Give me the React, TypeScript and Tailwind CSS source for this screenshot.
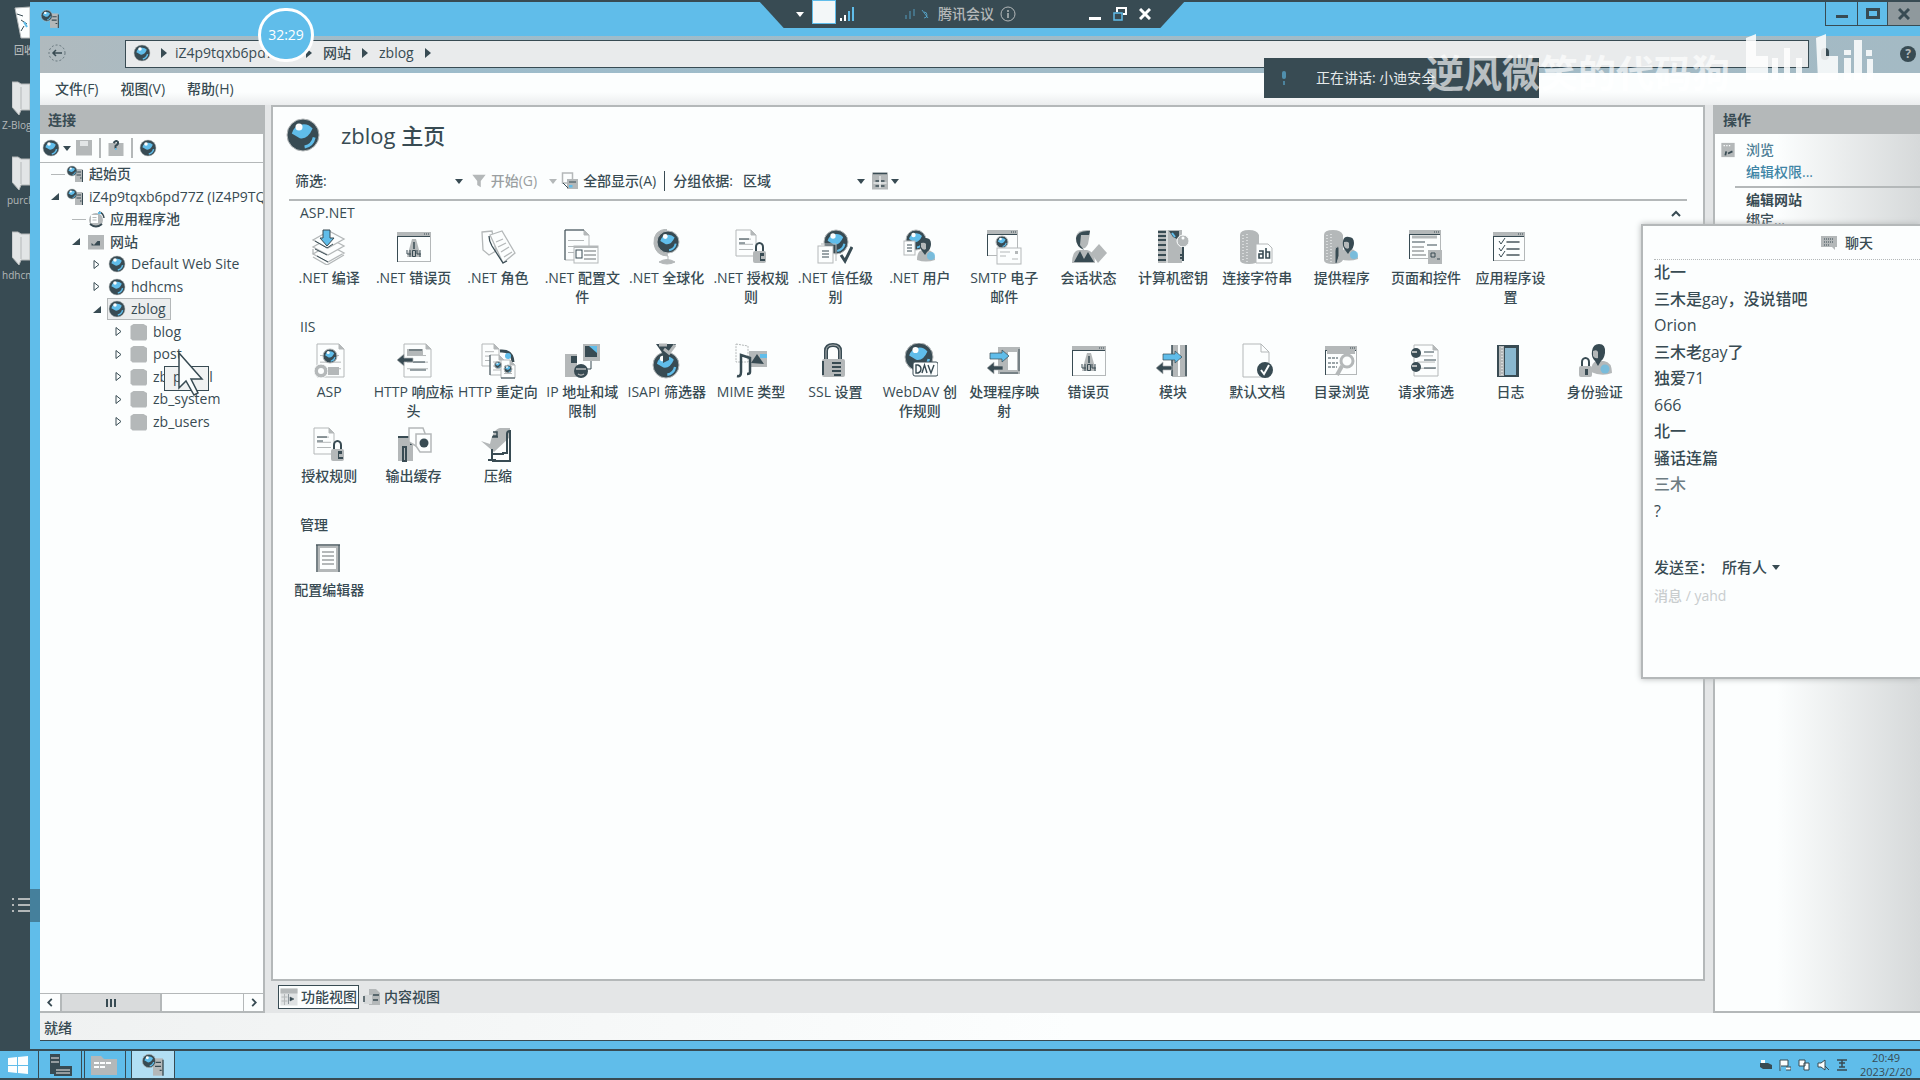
import React from "react";

const DARK = "#384b53";
const GREY = "#b4b8b9";
const BLUE = "#60bdea";
const PAPER = "#fcfefe";

/* ---------- drawing primitives, all on a 36 x 36 board ---------- */

function Ball({ x, y, r }: { x: number; y: number; r: number }) {
  return (
    <g>
      <circle cx={x} cy={y} r={r} fill={DARK} stroke={GREY} strokeWidth="1" />
      <path d={`M${x - r * 0.7} ${y - r * 0.1} a${r * 0.75} ${r * 0.75} 0 0 1 ${r * 1.3} ${-r * 0.3} q${-r * 0.3} ${r * 0.7} ${-r * 0.8} ${r * 0.6} z`} fill={BLUE} />
      <path d={`M${x + r * 0.1} ${y + r * 0.75} q${r * 0.5} ${-r * 0.1} ${r * 0.6} ${-r * 0.6}`} stroke={BLUE} strokeWidth={r * 0.18} fill="none" />
      <circle cx={x - r * 0.25} cy={y - r * 0.5} r={r * 0.22} fill={PAPER} />
    </g>
  );
}

function Doc({ x, y, w, h }: { x: number; y: number; w: number; h: number }) {
  return (
    <g stroke={GREY} fill={PAPER}>
      <path d={`M${x} ${y} h${w - 5} l5 5 v${h - 5} h${-w} z`} />
      <path d={`M${x + w - 5} ${y} v5 h5`} fill={GREY} />
      <path d={`M${x + 3} ${y + h * 0.35} h${w - 8} M${x + 3} ${y + h * 0.55} h${w - 6} M${x + 3} ${y + h * 0.75} h${w - 6}`} />
    </g>
  );
}

function Win({ x, y, w, h }: { x: number; y: number; w: number; h: number }) {
  return (
    <g>
      <rect x={x + 0.5} y={y + 0.5} width={w} height={h} fill={PAPER} stroke={GREY} />
      <rect x={x} y={y} width={w + 1} height="4" fill={GREY} />
      <path d={`M${x} ${y + 4.5} h${w} M${x + 0.5} ${y + 4} v${h - 3}`} stroke={DARK} />
      <path d={`M${x + w - 6} ${y + 2} h5`} stroke={DARK} strokeDasharray="1 1" />
    </g>
  );
}

function Padlock({ x, y }: { x: number; y: number }) {
  return (
    <g>
      <path d={`M${x + 3} ${y + 9} v-4 a3.5 4 0 0 1 7 0 v4`} fill="none" stroke={DARK} strokeWidth="2" />
      <rect x={x} y={y + 9} width="13" height="12" rx="2" fill={GREY} />
      <path d={`M${x + 7} ${y + 11} h4 v3 h-3 v3 h4 v2 h-5 z`} fill={DARK} />
    </g>
  );
}

function Person({ x, y }: { x: number; y: number }) {
  return (
    <g>
      <path d={`M${x + 1} ${y + 23} q0 -10 6 -10 h5 q7 1 7 10 q-9 3 -18 0z`} fill={GREY} />
      <circle cx={x + 15} cy={y + 19} r="4" fill={BLUE} opacity=".7" />
      <path d={`M${x + 4} ${y + 5} q1 -5 6 -4 q5 0 5 6 q0 5 -4 8 l-2 3 l-3 -4 q-3 -4 -2 -9z`} fill={DARK} />
      <path d={`M${x + 5} ${y + 6} q4 -1 5 1 v5 q-3 2 -5 -2z`} fill={GREY} />
    </g>
  );
}

function ArrowR({ x, y }: { x: number; y: number }) {
  return <path d={`M${x} ${y + 3} h12 v-3 l7 6 l-7 6 v-3 h-12 z`} fill={BLUE} stroke={DARK} strokeWidth=".7" />;
}
function ArrowL({ x, y }: { x: number; y: number }) {
  return <path d={`M${x + 16} ${y + 4} h-9 v-4 l-7 6 l7 6 v-4 h9 z`} fill={DARK} stroke={GREY} strokeWidth=".7" />;
}
function Alert404({ x, y }: { x: number; y: number }) {
  return (
    <g>
      <path d={`M${x} ${y + 20} l5 -18 h4 l5 18z`} fill={GREY} />
      <path d={`M${x + 7} ${y + 5} v7`} stroke={DARK} strokeWidth="1.5" />
      <path d={`M${x} ${y + 13} v4 h4 M${x + 3} ${y + 13} v7 M${x + 5.5} ${y + 13.5} h3 v6 h-3z M${x + 10} ${y + 13} v4 h4 M${x + 13} ${y + 13} v7`} stroke={DARK} fill="none" />
    </g>
  );
}
function Drum({ x, y }: { x: number; y: number }) {
  return (
    <g>
      <path d={`M${x} ${y + 5} q0 -5 9 -5 q8 0 10 5 v25 q-2 4 -10 4 q-9 0 -9 -4z`} fill={GREY} />
      <path d={`M${x + 3} ${y + 5} v25 M${x + 7} ${y + 4} v28`} stroke={PAPER} strokeDasharray="1 2" />
    </g>
  );
}

const art: Record<string, React.ReactNode> = {
  compile: (
    <g stroke={GREY} strokeWidth="1.3" fill={PAPER}>
      <path d="M2 25 l15 8 l16 -9 l-15 -8z M2 20 v5 M2 28 l14 8 l17 -10" />
      <path d="M2 18 l15 8 l16 -9 l-15 -8z" />
      <path d="M2 11 l15 8 l16 -9 l-15 -8z" />
      <path d="M4 12 l12 7 l6 -4 M4 20 l12 6 M6 27 l11 6" stroke={DARK} strokeWidth="1" fill="none" />
      <path d="M12 1 h7 v8 h4 l-7 8 l-7 -8 h3z" fill={BLUE} stroke={DARK} strokeWidth="1" />
    </g>
  ),
  error: <g><Win x={1} y={3} w={33} h={29} /><Alert404 x={11} y={8} /></g>,
  roles: (
    <g stroke={GREY} strokeWidth="1.3" fill={PAPER}>
      <path d="M2 3 l10 -1 l4 20 l-7 4 l-6 -5z" />
      <path d="M10 6 l12 -4 l13 22 l-12 10z" />
      <path d="M9 7 q0 5 3 10 l11 17 l4 -2" fill="none" stroke={DARK} />
      <path d="M16 13 l7 -3 M18 18 l8 -4 M21 23 l8 -5 M24 28 l8 -5" />
    </g>
  ),
  config: (
    <g>
      <Doc x={1} y={1} w={24} h={30} />
      <path d="M1 1 v30 M1 1 h19" stroke={DARK} />
      <rect x="10" y="17" width="24" height="17" fill={PAPER} stroke={GREY} />
      <path d="M10 18 h24 M20 22 h12 M20 26 h12 M20 30 h12" stroke={GREY} strokeWidth="2" />
      <rect x="12" y="21" width="6" height="8" fill={PAPER} stroke={DARK} />
    </g>
  ),
  globalize: (
    <g>
      <path d="M18 0 q-14 1 -13 15 q2 12 14 12 v4 M10 33 q8 -5 16 0 q-8 4 -16 0" fill={GREY} stroke={GREY} />
      <Ball x={19} y={13} r={11} />
    </g>
  ),
  authorize: <g><Doc x={3} y={1} w={20} h={26} /><path d="M6 10 h10 M6 14 h6" stroke={DARK} /><Padlock x={20} y={13} /></g>,
  trust: (
    <g>
      <Ball x={19} y={13} r={12} />
      <rect x="1" y="17" width="15" height="17" fill={PAPER} stroke={GREY} />
      <path d="M4 15 h15 v17" fill="none" stroke={GREY} />
      <path d="M5 22 h7 M5 25 h7 M5 28 h7" stroke={DARK} />
      <path d="M24 26 l4 6 l7 -14" fill="none" stroke={DARK} strokeWidth="3" />
    </g>
  ),
  users: (
    <g><Ball x={14} y={11} r={10} /><Person x={14} y={8} /><rect x="2" y="12" width="11" height="14" fill={PAPER} stroke={GREY} /><path d="M5 16 h5 M5 19 h5 M5 22 h5" stroke={DARK} /></g>
  ),
  smtp: (
    <g><Win x={1} y={1} w={30} h={25} /><Ball x={16} y={13} r={6} /><rect x="11" y="19" width="24" height="16" fill={PAPER} stroke={GREY} /><path d="M14 23 h10 M14 27 h6 M26 30 h6" fill="none" stroke={GREY} /><path d="M29 22 h3 v3 h-3z" fill={GREY} /></g>
  ),
  session: (
    <g>
      <path d="M1 34 q0 -12 7 -13 h8 q8 2 8 13z" fill={GREY} /><path d="M3 33 l6 -11 l4 8 l4 -7 l6 10" fill={DARK} />
      <path d="M5 7 q2 -7 14 -6 v3 l-2 11 q-3 6 -7 4 q-6 -4 -5 -12z" fill={GREY} /><path d="M5 9 q2 -8 14 -7 l-1 4 h-8 l-1 10 l4 5 q-8 -3 -8 -12z" fill={DARK} />
      <path d="M20 24 l8 -9 l8 9 l-9 10z" fill={GREY} />
    </g>
  ),
  keys: (
    <g>
      <rect x="3" y="1" width="24" height="33" fill={GREY} />
      <path d="M3 3 h8 M3 7 h8 M3 11 h8 M3 16 h8 M3 21 h8 M3 26 h8 M3 31 h8" stroke={DARK} strokeWidth="2" />
      <path d="M12 1 v33" stroke={PAPER} /><path d="M14 2 h10 v9 l-6 -3z" fill={DARK} /><path d="M17 4 l3 4" stroke={BLUE} strokeWidth="2" />
      <circle cx="28" cy="12" r="6" fill={GREY} stroke={PAPER} /><circle cx="28" cy="9" r="1.5" fill={PAPER} /><path d="M28 18 v14 M28 26 h-3 M28 29 h-3" stroke={DARK} strokeWidth="2" />
    </g>
  ),
  connection: (
    <g><Drum x={1} y={1} /><path d="M17 15 h12 l4 4 v15 h-16z" fill={PAPER} stroke={GREY} /><path d="M20 22 h4 v7 h-4 v-4 h4 M27 19 v10 h3.500 v-6 h-3.500" fill="none" stroke={DARK} strokeWidth="1.600" /></g>
  ),
  providers: <g><Drum x={0} y={1} /><Person x={15} y={7} /><path d="M11 34 v-12 q0 -5 4 -4 v9 l-2 7" fill={DARK} stroke={GREY} /></g>,
  pages: (
    <g><Win x={1} y={1} w={31} h={28} /><path d="M4 8 h25" stroke={GREY} strokeWidth="3" /><path d="M4 13 h13 M19 16 h10" stroke={DARK} /><path d="M4 18 h12 M4 22 h12 M4 26 h14" stroke={GREY} strokeWidth="2" /><rect x="20" y="21" width="14" height="14" fill={GREY} /><path d="M23 24 h4 v4 h-4z M29 30 h3" fill="none" stroke={DARK} /></g>
  ),
  settings: (
    <g><Win x={1} y={3} w={31} h={28} /><path d="M14 13 h14 M14 20 h14 M14 26 h14" stroke={GREY} strokeWidth="2" /><path d="M15 13 h12 M15 20 h12 M15 26 h12 M7 12 l2 3 l4 -6 M7 19 l2 3 l4 -6 M7 25 l2 3 l4 -6" fill="none" stroke={DARK} /></g>
  ),
  asp: (
    <g><Doc x={6} y={1} w={27} h={33} /><Ball x={19} y={13} r={7} /><circle cx="10" cy="28" r="7" fill={GREY} stroke={PAPER} /><circle cx="10" cy="28" r="3" fill={PAPER} /><path d="M17 24 h11 v8 h-11z" fill={GREY} /></g>
  ),
  headers: <g><Doc x={8} y={1} w={27} h={33} /><path d="M11 6 h16 v6 h-16z" fill={GREY} /><path d="M13 7 h13 M17 19 h12 M14 27 h16" stroke={DARK} /><ArrowL x={1} y={11} /></g>,
  redirect: (
    <g><Doc x={2} y={1} w={17} h={22} /><path d="M20 8 q12 -1 13 11" stroke={DARK} strokeWidth="3" fill="none" /><circle cx="28" cy="13" r="3" fill={BLUE} /><Doc x={10} y={12} w={14} h={20} /><Doc x={21} y={17} w={14} h={18} /><path d="M10 12 v20 M21 35 h14" stroke={DARK} /><Ball x={18} y={22} r={3.500} /><Ball x={28} y={26} r={4} /></g>
  ),
  ip: (
    <g><path d="M1 11 h12 v23 h-12z" fill={GREY} /><path d="M7 13 h6 v7 h-6z" fill={DARK} /><rect x="19" y="1" width="17" height="17" fill={GREY} /><path d="M21 3 h12 v11 h-12z" fill={DARK} /><path d="M25 3 h8 v7z" fill={BLUE} /><path d="M27 18 v8 h-10" fill="none" stroke={DARK} /><circle cx="17" cy="28" r="7" fill={DARK} /><path d="M12 26 h10 M14 31 q3 2 6 0" stroke={GREY} strokeWidth="1.500" /></g>
  ),
  isapi: <g><Ball x={17} y={22} r={13} /><path d="M7 1 h20 l-7 10 v6 l-6 3 v-9z" fill={DARK} /><path d="M10 2 h8 M15 6 l5 4 l6 -8" stroke={GREY} strokeWidth="3" fill="none" /></g>,
  mime: (
    <g><path d="M3 1 l12 2 v16 h-12z" fill={PAPER} stroke={GREY} strokeDasharray="2 1" /><path d="M16 8 h18 v16 h-18z" fill={GREY} /><path d="M27 11 h7 v4 h-7z" fill={BLUE} /><path d="M4 33 q4 1 4 -4 v-17 l9 3 v14 q0 2 -3 2" fill="none" stroke={DARK} strokeWidth="2.500" /><path d="M18 20 l6 -9 l7 10z" fill={DARK} /></g>
  ),
  ssl: (
    <g><path d="M9 17 v-9 q0 -6 7 -6 q7 0 7 6 v9" fill="none" stroke={DARK} strokeWidth="4" /><path d="M9 17 v-9 q0 -6 7 -6 q7 0 7 6 v9" fill="none" stroke={GREY} strokeWidth="1" /><rect x="5" y="16" width="23" height="18" rx="2" fill={GREY} /><path d="M5 18 h2 v14 h-2z M15 19 h9 v2 h-9z M15 23 h9 v2 h-9z M15 27 h9 v2 h-9z M17 31 h7 v2 h-7z" fill={DARK} /></g>
  ),
  webdav: (
    <g><Ball x={17} y={14} r={14} /><rect x="11" y="19" width="25" height="14" rx="2" fill={PAPER} stroke={DARK} /><path d="M14 22 v8 h2 q3 -1 3 -4 t-3 -4z M20 30 l2.500 -8 l2.500 8 M26 22 l3 8 l3 -8" fill="none" stroke={DARK} strokeWidth="1.400" /></g>
  ),
  handler: <g><path d="M12 4 h22 v27 h-22z" fill={GREY} /><path d="M33 6 v22 M14 30 h18" stroke={DARK} /><rect x="22" y="9" width="9" height="18" fill={PAPER} /><ArrowR x={4} y={7} /><ArrowL x={1} y={19} /></g>,
  modules: <g><path d="M17 2 h15 v32 h-15z" fill={GREY} /><path d="M17 2 v31 M31 2 v31" stroke={DARK} strokeWidth="1.500" /><path d="M24 2 v31" stroke={PAPER} strokeWidth="2" /><ArrowR x={8} y={8} /><ArrowL x={1} y={19} /></g>,
  defaultdoc: <g><path d="M4 1 h18 l8 8 v25 h-26z" fill={PAPER} stroke={GREY} /><path d="M22 1 v8 h8" fill="none" stroke={GREY} /><circle cx="26" cy="27" r="8" fill={DARK} /><path d="M22 27 l3 4 l5 -9" fill="none" stroke={PAPER} strokeWidth="2" /></g>,
  browse: <g><Win x={1} y={3} w={31} h={28} /><path d="M3 9 h28" stroke={GREY} strokeWidth="4" /><path d="M4 15 h10 M4 20 h10 M4 24 h9" stroke={DARK} strokeDasharray="3 1" /><circle cx="23" cy="18" r="6" fill={PAPER} stroke={GREY} strokeWidth="3" /><path d="M18 23 l-5 9" stroke={GREY} strokeWidth="4" /></g>,
  filter: <g><Doc x={6} y={2} w={24} h={31} /><path d="M16 9 h10 M16 17 h12 M16 25 h12" stroke={DARK} /><circle cx="8" cy="10" r="5" fill={DARK} /><circle cx="8" cy="24" r="5" fill={DARK} /><path d="M4 9 h5 M4 23 h5" stroke={GREY} strokeWidth="2" /></g>,
  log: <g><rect x="5" y="2" width="22" height="32" fill={DARK} /><rect x="7" y="3" width="5" height="30" fill={GREY} /><rect x="13" y="5" width="11" height="27" fill="#8ab8cf" /><path d="M10 4 v28" stroke={PAPER} strokeDasharray="1 2" /></g>,
  auth: <g><path d="M14 29 q0 -10 6 -11 h7 q8 1 8 12 q-10 4 -21 -1z" fill={GREY} /><circle cx="28" cy="26" r="4.500" fill={BLUE} opacity=".7" /><path d="M15 8 q1 -7 7 -7 q7 0 6 9 q-1 6 -4 8 l-3 5 l-3 -5 q-4 -4 -3 -10z" fill={DARK} /><path d="M16 8 q4 -2 5 1 v6 q-3 1 -5 -2z" fill={GREY} /><g transform="translate(2 14)"><path d="M3 9 v-4 a3.500 4 0 0 1 7 0 v4" fill="none" stroke={DARK} strokeWidth="2" /><rect x="0" y="9" width="13" height="11" rx="2" fill={GREY} /><path d="M6 12 h3 v6 h-3z" fill={DARK} /></g></g>,
  cache: <g><path d="M2 10 h15 v24 h-15z" fill={GREY} /><path d="M2 10 h13 v8 M7 20 h3 v14 h-3z" fill="none" stroke={DARK} strokeWidth="2" /><path d="M13 1 h14 l3 8 v10 h-10 l-7 -4z" fill={PAPER} stroke={GREY} strokeWidth="1.500" /><path d="M20 7 h15 v18 h-11 l-4 -6z" fill={PAPER} stroke={GREY} strokeWidth="1.500" /><circle cx="28" cy="16" r="4.500" fill={DARK} /></g>,
  compress: <g><path d="M1 14 l9 3 q3 -15 10 -16 h10 v9 l-16 15z" fill={GREY} /><path d="M13 5 h4 v4 h-4 M12 10 h6" stroke={DARK} fill="none" strokeWidth="1.500" /><path d="M22 26 h5 v-19 q0 -3 3 -3 v30 h-18" fill="none" stroke={DARK} strokeWidth="2" /><path d="M12 22 v12 M8 33 h8 M12 27 h12" stroke={DARK} strokeWidth="2" /></g>,
  editor: <g><rect x="5" y="3" width="24" height="28" fill={GREY} /><path d="M5 4 h24 M6 4 v27 M28 4 v27" stroke={DARK} /><rect x="9" y="7" width="16" height="21" fill={PAPER} /><path d="M11 11 h12 M11 15 h12 M11 19 h12 M11 23 h12" stroke={GREY} strokeWidth="2" /></g>,
  globe: <Ball x={18} y={18} r={16} />,
  server: <g><path d="M18 8 h15 v26 h-15z" fill={GREY} /><path d="M21 14 h9 M21 20 h9 M28 26 h3 M33 10 v24" stroke={DARK} strokeWidth="2" /><Ball x={12} y={12} r={10} /></g>,
  pool: <g><circle cx="18" cy="20" r="14" fill={GREY} /><path d="M6 28 q12 10 24 0" stroke={DARK} strokeWidth="4" fill="none" /><rect x="8" y="10" width="14" height="16" fill={PAPER} /><path d="M11 15 h8 M11 20 h8" stroke={GREY} strokeWidth="2" /><path d="M24 4 q9 2 10 12" stroke={DARK} strokeWidth="3" fill="none" /><path d="M22 6 h6" stroke={BLUE} strokeWidth="4" /></g>,
  folder: <path d="M1 6 l6 -4 h20 l7 4 v26 l-2 3 h-27 l-4 -4z" fill={GREY} />,
  sites: <g><path d="M2 4 h32 v29 h-32z" fill={GREY} /><path d="M9 25 v-5 l5 4 l7 -8 h5 v9z" fill={DARK} /></g>,
  save: <g><path d="M2 2 h32 v31 h-32z" fill={GREY} /><path d="M10 4 h16 v10 h-16z" fill="#e2e5e6" /></g>,
  up: <g><path d="M3 8 h30 v26 h-30z" fill={GREY} /><path d="M13 8 q6 -7 9 -2 q1 5 -5 8 v5" fill="none" stroke={DARK} strokeWidth="4" /><path d="M16 20 h3" stroke={BLUE} strokeWidth="4" /></g>,
  showall: <g><rect x="3" y="2" width="20" height="20" fill={PAPER} stroke={GREY} strokeWidth="3" /><rect x="12" y="14" width="22" height="20" fill={GREY} /><path d="M4 22 l10 10 M16 20 h14" stroke={DARK} strokeWidth="2" /><path d="M16 26 h7 v5 h-7z" fill={BLUE} /></g>,
  features: <g><path d="M1 1 h34 v34 h-34z" fill="#dfe2e3" /><path d="M1 1 h34 v10 h-34z" fill={GREY} /><path d="M3 18 h12 M3 26 h12 M9 12 v22" stroke={GREY} strokeWidth="2" /><path d="M17 12 v20 M20 18 l8 4 l-8 4z" stroke={DARK} fill={DARK} /></g>,
  content: <g><path d="M12 2 h14 l8 8 v24 h-22z" fill={GREY} /><path d="M2 14 h16 v18 h-16z" fill="#d5d8d9" /><path d="M2 16 v12 M20 14 h12 M20 24 h10" stroke={DARK} strokeWidth="3" /></g>,
  view: <g><rect x="2" y="1" width="32" height="34" fill={GREY} /><path d="M4 3 h28 M9 18 h7 M20 18 h7 M9 28 h7 M20 28 h7" stroke={DARK} strokeWidth="3" /><path d="M18 8 v24 M5 22 h26" stroke={PAPER} strokeWidth="2" /></g>,
  funnel: <path d="M3 4 h30 l-11 14 v14 l-8 -5 v-9z" fill={GREY} />,
  page: <g><path d="M3 2 h30 v32 h-30z" fill={GREY} /><path d="M12 30 l2 -9 M18 26 l10 -5" stroke={DARK} strokeWidth="4" /><path d="M8 8 h18" stroke={PAPER} strokeWidth="3" strokeDasharray="3 3" /></g>,
};

function Icon({ name, className }: { name: string; className: string }) {
  return (
    <svg viewBox="0 0 36 36" className={className} aria-hidden="true">
      {art[name]}
    </svg>
  );
}

function Tri({ className = "" }: { className?: string }) {
  return (
    <svg viewBox="0 0 8 5" className={"h-[5px] w-2 shrink-0 " + className} aria-hidden="true">
      <path d="M0 0 h8 l-4 5z" fill="currentColor" />
    </svg>
  );
}
function CrumbArrow() {
  return (
    <svg viewBox="0 0 6 10" className="h-[10px] w-[6px] shrink-0" aria-hidden="true">
      <path d="M0 0 l6 5 l-6 5z" fill={DARK} />
    </svg>
  );
}

/* ---------- data ---------- */

type Node = { label: string; icon: string; pad: string; state: "open" | "closed" | "none"; selected?: boolean };
const tree: Node[] = [
  { label: "起始页", icon: "server", pad: "pl-[11px]", state: "none" },
  { label: "iZ4p9tqxb6pd77Z (IZ4P9TQXB6PD77Z\\Administrator)", icon: "server", pad: "pl-[11px]", state: "open" },
  { label: "应用程序池", icon: "pool", pad: "pl-8", state: "none" },
  { label: "网站", icon: "sites", pad: "pl-8", state: "open" },
  { label: "Default Web Site", icon: "globe", pad: "pl-[53px]", state: "closed" },
  { label: "hdhcms", icon: "globe", pad: "pl-[53px]", state: "closed" },
  { label: "zblog", icon: "globe", pad: "pl-[53px]", state: "open", selected: true },
  { label: "blog", icon: "folder", pad: "pl-[75px]", state: "closed" },
  { label: "post", icon: "folder", pad: "pl-[75px]", state: "closed" },
  { label: "zb_install", icon: "folder", pad: "pl-[75px]", state: "closed" },
  { label: "zb_system", icon: "folder", pad: "pl-[75px]", state: "closed" },
  { label: "zb_users", icon: "folder", pad: "pl-[75px]", state: "closed" },
];

const sections: { title: string; items: [string, string][] }[] = [
  {
    title: "ASP.NET",
    items: [
      ["compile", ".NET 编译"], ["error", ".NET 错误页"], ["roles", ".NET 角色"], ["config", ".NET 配置文\n件"],
      ["globalize", ".NET 全球化"], ["authorize", ".NET 授权规\n则"], ["trust", ".NET 信任级\n别"], ["users", ".NET 用户"],
      ["smtp", "SMTP 电子\n邮件"], ["session", "会话状态"], ["keys", "计算机密钥"], ["connection", "连接字符串"],
      ["providers", "提供程序"], ["pages", "页面和控件"], ["settings", "应用程序设\n置"],
    ],
  },
  {
    title: "IIS",
    items: [
      ["asp", "ASP"], ["headers", "HTTP 响应标\n头"], ["redirect", "HTTP 重定向"], ["ip", "IP 地址和域\n限制"],
      ["isapi", "ISAPI 筛选器"], ["mime", "MIME 类型"], ["ssl", "SSL 设置"], ["webdav", "WebDAV 创\n作规则"],
      ["handler", "处理程序映\n射"], ["error", "错误页"], ["modules", "模块"], ["defaultdoc", "默认文档"],
      ["browse", "目录浏览"], ["filter", "请求筛选"], ["log", "日志"], ["auth", "身份验证"],
      ["authorize", "授权规则"], ["cache", "输出缓存"], ["compress", "压缩"],
    ],
  },
  { title: "管理", items: [["editor", "配置编辑器"]] },
];

const messages = ["北一", "三木是gay，没说错吧", "Orion", "三木老gay了", "独爱71", "666", "北一", "骚话连篇", "三木", "?"];

/* ---------- parts ---------- */

function Desktop() {
  return (
    <aside className="relative flex w-[30px] shrink-0 flex-col overflow-hidden bg-[#384b53] text-[10px] text-[#b4b8b9]">
      {["回收站", "Z-Blog", "purch", "hdhcms"].map((t, i) => (
        <div key={t} className="flex h-[75px] shrink-0 flex-col pt-[6px]">
          <svg viewBox="0 0 18 34" className="ml-3 h-[34px] w-[18px] shrink-0" aria-hidden="true">
            {i === 0 ? (
              <g><path d="M3 2 l15 -1 v31 h-9z" fill={PAPER} stroke={GREY} /><path d="M5 8 l6 2 M9 14 l6 4 M12 20 l-3 5" stroke={DARK} /><path d="M12 16 l3 5" stroke={BLUE} strokeWidth="2" /></g>
            ) : (
              <path d="M0 1 h6 l3 2 h9 v26 h-9 l-2 5 l-7 -8z M9 6 v22" fill="#e2e5e6" stroke={GREY} />
            )}
          </svg>
          <span className={i === 0 ? "ml-[14px] whitespace-nowrap leading-5" : i === 2 ? "ml-[7px] whitespace-nowrap leading-5" : "ml-[2px] whitespace-nowrap leading-5"}>{t}</span>
        </div>
      ))}
      <div className="absolute bottom-[137px] left-3 flex flex-col gap-1">
        {[0, 1, 2].map((n) => (
          <div key={n} className="flex gap-1">
            <span className="h-[2px] w-[2px] bg-[#b4b8b9]" />
            <span className="h-[2px] w-3 bg-[#b4b8b9]" />
          </div>
        ))}
      </div>
    </aside>
  );
}

function TreeRow({ node }: { node: Node }) {
  return (
    <li className={"flex min-w-0 items-center " + node.pad}>
      <span className="flex w-[14px] shrink-0 items-center">
        {node.state !== "none" && (
          <button aria-label={"展开 " + node.label}>
            <svg viewBox="0 0 8 9" className="block h-[9px] w-2" aria-hidden="true">
              {node.state === "open" ? <path d="M8 1 v7 h-8z" fill={DARK} /> : <path d="M1 0.5 l5 4 l-5 4z" fill={PAPER} stroke={DARK} />}
            </svg>
          </button>
        )}
        {node.state === "none" && <span className="w-full border-t border-[#b4b8b9]" />}
      </span>
      <button
        className={
          "flex min-w-0 items-center gap-[5px] whitespace-nowrap " +
          (node.selected ? "border border-[#b4b8b9] bg-[#ebedee] pr-1 leading-5" : "border border-transparent leading-5")
        }
      >
        <Icon name={node.icon} className="h-[18px] w-[18px] shrink-0" />
        {node.label}
      </button>
    </li>
  );
}

function Connections() {
  return (
    <section className="flex w-[225px] shrink-0 flex-col overflow-hidden border-b-2 border-r-2 border-[#b4b8b9] bg-[#fcfefe]">
      <h2 className="flex h-[29px] shrink-0 items-center bg-[#b4b8b9] pl-2 text-sm font-bold">连接</h2>
      <div className="flex h-[29px] shrink-0 items-center border-b border-[#b4b8b9] pl-[2px]">
        <button aria-label="创建连接" className="flex items-center gap-[3px]"><Icon name="globe" className="h-[18px] w-[18px]" /><Tri /></button>
        <button aria-label="保存连接" className="ml-1"><Icon name="save" className="h-[18px] w-[18px]" /></button>
        <span className="ml-1.5 h-5 w-[2px] bg-[#b4b8b9]" />
        <button aria-label="向上" className="ml-1.5"><Icon name="up" className="h-[18px] w-[18px]" /></button>
        <span className="ml-1.5 h-5 w-[2px] bg-[#b4b8b9]" />
        <button aria-label="删除连接" className="ml-1.5"><Icon name="globe" className="h-[18px] w-[18px]" /></button>
      </div>
      <ul className="grid h-[270px] shrink-0 auto-rows-fr text-sm">
        {tree.map((n) => <TreeRow key={n.label} node={n} />)}
      </ul>
      <div className="mt-auto flex h-[18px] shrink-0 items-center border-t border-[#b4b8b9] text-base leading-4">
        <button aria-label="向左滚动" className="flex w-5 justify-center">
          <svg viewBox="0 0 6 10" className="h-[9px] w-[6px]"><path d="M5 1 l-4 4 l4 4" fill="none" stroke={DARK} strokeWidth="2" /></svg>
        </button>
        <div className="flex h-full flex-1">
          <div className="flex h-full w-[56%] items-center justify-center gap-[2px] border-x-2 border-[#b4b8b9] bg-[#d9dbdc]">
            <span className="h-2 w-[2px] bg-[#384b53]" /><span className="h-2 w-[2px] bg-[#384b53]" /><span className="h-2 w-[2px] bg-[#384b53]" />
          </div>
        </div>
        <button aria-label="向右滚动" className="flex h-full w-5 items-center justify-center border-l border-[#b4b8b9]">
          <svg viewBox="0 0 6 10" className="h-[9px] w-[6px]"><path d="M1 1 l4 4 l-4 4" fill="none" stroke={DARK} strokeWidth="2" /></svg>
        </button>
      </div>
    </section>
  );
}

function FilterBar() {
  return (
    <div className="mr-4 ml-4 flex h-[38px] items-center border-b-2 border-[#b4b8b9] text-sm whitespace-nowrap">
      <label htmlFor="filter" className="ml-[6px]">筛选:</label>
      <input id="filter" className="ml-2 h-5 w-[120px] bg-transparent outline-none" />
      <Tri />
      <button className="ml-2 flex items-center text-[#9a9fa1]"><Icon name="funnel" className="mr-1 h-4 w-4" />开始(G)</button>
      <Tri className="ml-3 text-[#b4b8b9]" />
      <button className="ml-1 flex items-center gap-1"><Icon name="showall" className="h-[18px] w-[18px]" />全部显示(A)</button>
      <span className="mx-2 h-5 w-px bg-[#384b53]" />
      <label htmlFor="group">分组依据:</label>
      <span className="ml-2.5 flex items-center">
        <select id="group" className="w-[114px] appearance-none bg-transparent outline-none"><option>区域</option></select>
        <Tri />
      </span>
      <button aria-label="视图" className="ml-1.5 flex items-center gap-0.5"><Icon name="view" className="h-[18px] w-[18px]" /><Tri /></button>
    </div>
  );
}

function Home() {
  return (
    <main className="flex min-w-0 flex-1 flex-col">
      <div className="flex flex-1 flex-col overflow-hidden border-2 border-[#b4b8b9] bg-[#fcfefe]">
        <header className="flex h-[56px] shrink-0 items-center gap-5 pl-3">
          <Icon name="globe" className="h-9 w-9" />
          <h1 className="text-[22px] leading-7 font-medium">zblog 主页</h1>
        </header>
        <FilterBar />
        <div className="pl-[14px] pr-[66px] text-sm">
          {sections.map((s, i) => (
            <section key={s.title} className="mb-1">
              <div className="flex h-[26px] items-center justify-between pb-0.5 pl-[13px]">
                <h3 className="leading-5">{s.title}</h3>
                {i === 0 && (
                  <button aria-label="折叠" className="-mr-11">
                    <svg viewBox="0 0 10 7" className="h-[7px] w-[10px]"><path d="M1 6 l4 -4 l4 4" fill="none" stroke={DARK} strokeWidth="2" /></svg>
                  </button>
                )}
              </div>
              <div className="grid grid-cols-[repeat(16,minmax(0,1fr))]">
                {s.items.map(([icon, label]) => (
                  <button key={label} className="flex h-[84px] flex-col items-center pt-0.5">
                    <Icon name={icon} className="h-9 w-9 shrink-0" />
                    <span className="mt-[3px] whitespace-pre text-center leading-[19px]">{label}</span>
                  </button>
                ))}
              </div>
            </section>
          ))}
        </div>
      </div>
      <div className="flex h-8 shrink-0 items-center gap-1 pl-[7px] text-sm">
        <button className="flex h-6 items-center gap-[3px] border border-[#384b53] bg-[#fcfefe] px-px whitespace-nowrap"><Icon name="features" className="h-[18px] w-[18px]" />功能视图</button>
        <button className="flex items-center gap-[3px] whitespace-nowrap"><Icon name="content" className="h-[18px] w-[18px]" />内容视图</button>
      </div>
    </main>
  );
}

function Actions() {
  return (
    <aside className="flex w-[207px] shrink-0 flex-col border-b-2 border-l-2 border-[#b4b8b9] bg-linear-to-r from-[#fcfefe] from-30% to-[#d6d9da] text-sm">
      <h2 className="flex h-[29px] items-center bg-[#b4b8b9] pl-2 font-bold">操作</h2>
      <div className="flex flex-col items-start pt-[5px]">
        <a href="#browse" className="flex h-[22px] items-center gap-[10px] pl-[5px] text-[#4f7f96]"><Icon name="page" className="h-[18px] w-4" />浏览</a>
        <a href="#perm" className="flex h-[22px] items-center pl-[31px] text-[#3f85a6]">编辑权限...</a>
        <span className="my-[3px] ml-5 h-[2px] self-stretch bg-[#b4b8b9]" />
        <strong className="flex h-[18px] items-center pl-[31px]">编辑网站</strong>
        <a href="#bind" className="flex h-[22px] items-center pl-[31px]">绑定...</a>
      </div>
    </aside>
  );
}

function Chat() {
  return (
    <section className="absolute right-0 top-[224px] flex h-[455px] w-[279px] flex-col border-y-2 border-l-2 border-[#b4b8b9] bg-[#fcfefe] pl-[11px] text-base shadow-[0_0_6px_#b4b8b9]">
      <header className="flex h-[34px] items-center gap-2 border-b border-dotted border-[#b4b8b9] pl-[167px] text-sm">
        <svg viewBox="0 0 16 14" className="h-[14px] w-4"><path d="M0 0 h16 v11 h-2 v3 l-3 -3 h-11z" fill={GREY} /><path d="M3 3 h10 M3 6 h10 M3 9 h6" stroke={DARK} strokeDasharray="1 1" /></svg>
        聊天
      </header>
      <ul className="grid h-[265px] auto-rows-fr items-center leading-6">
        {messages.map((m, i) => <li key={i} className={i === 8 ? "-mt-0.5 text-[#6d7c82]" : "-mt-0.5"}>{m}</li>)}
      </ul>
      <div className="mt-8 flex items-center text-[15px] leading-5">
        <label htmlFor="to">发送至：</label>
        <select id="to" className="ml-2 w-[50px] appearance-none bg-transparent outline-none"><option>所有人</option></select>
        <Tri />
      </div>
      <input aria-label="消息" placeholder="消息 / yahd" className="mt-1.5 h-6 w-60 bg-transparent text-sm outline-none placeholder:text-[#c9cdce]" />
    </section>
  );
}

function MeetingBar() {
  return (
    <div className="absolute left-[758px] top-0 flex h-7 w-[428px] items-center bg-[#384b53] pl-[38px] text-sm text-[#b4b8b9] [clip-path:polygon(0_0,100%_0,94%_100%,6%_100%)]">
      <Tri className="text-white" />
      <span className="ml-2 h-6 w-6 self-start border border-[#60bdea] bg-[#f3f7f8]" />
      <svg viewBox="0 0 16 16" className="ml-1 h-4 w-4"><path d="M1 15 v-3 M5 15 v-6" stroke="#fff" strokeWidth="2" /><path d="M9 15 v-10 M13 15 v-14" stroke={BLUE} strokeWidth="2" /></svg>
      <svg viewBox="0 0 28 12" className="ml-12 h-3 w-7"><path d="M2 11 v-4 M6 11 v-8 M10 8 v-7 M20 4 a3 3 0 1 1 0 6 M18 2 l6 8" stroke={BLUE} fill="none" opacity=".7" /></svg>
      <span className="ml-1.5 whitespace-nowrap">腾讯会议</span>
      <svg viewBox="0 0 16 16" className="ml-1.5 h-4 w-4"><circle cx="8" cy="8" r="7" fill="none" stroke={GREY} /><path d="M8 4 v2 M8 7 v5" stroke={GREY} strokeWidth="1.500" /></svg>
      <button aria-label="最小化会议" className="ml-[73px] mt-2 h-[3px] w-3 bg-white" />
      <button aria-label="还原会议" className="ml-3"><svg viewBox="0 0 14 16" className="h-4 w-[14px]"><path d="M4 6 v-4 h9 v6 h-3 M4 2 h9" fill="none" stroke="#fff" strokeWidth="2" /><path d="M1 7 h8 v7 h-8z" fill="none" stroke={BLUE} strokeWidth="1.500" /></svg></button>
      <button aria-label="关闭会议" className="ml-3"><svg viewBox="0 0 12 12" className="h-3 w-3"><path d="M1 1 l10 10 M11 1 l-10 10" stroke="#fff" strokeWidth="3" /></svg></button>
    </div>
  );
}

function Watermark() {
  return (
    <div className="pointer-events-none absolute right-8 top-[34px] flex items-start gap-4 text-white/65">
      <span className="mt-[17px] text-[38px] leading-[42px] font-bold whitespace-nowrap">逆风微笑的代码狗</span>
      <svg viewBox="0 0 142 48" className="h-12 w-[142px]" fill="#fff" fillOpacity=".85">
        <path d="M0 4 l10 -4 v22 h12 v24 h-22z M26 24 h6 v22 h-6z M38 14 h6 v32 h-6z M50 24 h6 v22 h-6z M70 4 l10 -4 v22 h12 v24 h-20z M98 24 h7 v22 h-7z M98 16 h7 v5 h-7z M108 6 h8 v40 h-8z M120 16 h6 v6 h-6z M121 25 h6 v21 h-6z" />
      </svg>
    </div>
  );
}

function Taskbar() {
  return (
    <footer className="flex h-[31px] shrink-0 items-center border-y-2 border-[#384b53] bg-[#60bdea] pl-2">
      <button aria-label="开始"><svg viewBox="0 0 20 18" className="h-[18px] w-5"><path d="M0 2 l9 -1 v8 h-9z M10 1 l10 -1 v9 h-10z M0 10 h9 v7 l-9 -1z M10 10 h10 v8 l-10 -1z" fill={PAPER} /></svg></button>
      <span className="ml-2.5 h-full w-px bg-[#384b53]" />
      <button aria-label="服务器管理器" className="ml-2.5">
        <svg viewBox="0 0 24 22" className="h-[22px] w-6"><path d="M1 0 h10 v20 h-10z M5 12 h18 v10 h-18z" fill={DARK} /><path d="M2 4 h8 M2 8 h8 M7 16 h14 M7 19 h14" stroke={GREY} strokeWidth="1.500" /></svg>
      </button>
      <span className="ml-2 h-full w-1 border-x border-[#384b53]" />
      <button aria-label="文件资源管理器" className="ml-1.5">
        <svg viewBox="0 0 26 20" className="h-5 w-[26px]"><path d="M0 1 h10 l3 3 h13 v16 h-26z" fill={GREY} /><path d="M3 8 h18 M3 12 h12" stroke={PAPER} strokeWidth="2" strokeDasharray="5 1" /></svg>
      </button>
      <span className="ml-2 h-full w-[7px] border-x border-[#384b53]" />
      <button aria-label="IIS 管理器" className="flex h-full w-[43px] items-center justify-center border-r border-[#384b53] bg-[#b2dff4]"><Icon name="server" className="h-6 w-6" /></button>
      <div className="ml-auto flex items-center gap-[7px]">
        {[0, 1, 2, 3, 4].map((n) => (
          <svg key={n} viewBox="0 0 12 12" className="h-3 w-3" aria-hidden="true">
            {n === 0 && <g><path d="M0 4 h8 l4 2 v4 h-9 l-3 -2z" fill={DARK} /><path d="M1 1 h4 v3 h-4z" fill={PAPER} /></g>}
            {n === 1 && <path d="M1 12 v-11 h8 v6 h-7 M7 8 h5 v3 h-5" fill={PAPER} stroke={DARK} />}
            {n === 2 && <path d="M1 1 h6 v6 h-6z M6 4 h5 v7 h-5z" fill={PAPER} stroke={DARK} />}
            {n === 3 && <path d="M1 4 h3 l4 -3 v10 l-4 -3 h-3z M8 7 l4 4" fill={PAPER} stroke={DARK} />}
            {n === 4 && <path d="M1 1 h10 M3 4 h6 M6 1 v7 M1 11 h10 M3 8 h6" stroke={DARK} strokeWidth="1.500" />}
          </svg>
        ))}
      </div>
      <div className="ml-3 mr-2 text-center text-[11px] leading-[14px]">
        <div>20:49</div>
        <div>2023/2/20</div>
      </div>
    </footer>
  );
}

export default function App() {
  return (
    <div className="relative flex h-screen flex-col overflow-hidden bg-[#60bdea] font-['Open_Sans','Noto_Sans_CJK_SC',sans-serif] font-medium text-[#384b53]">
      <div className="flex min-h-0 flex-1">
        <Desktop />
        <div className="flex min-w-0 flex-1 flex-col border-t-2 border-[#384b53] pb-2 pl-[10px]">
          <header className="flex h-[34px] shrink-0 items-start justify-between">
            <Icon name="server" className="mt-[7px] h-5 w-5" />
            <div className="flex h-6 border-b border-l border-[#384b53]">
              <button aria-label="最小化" className="flex w-8 items-center justify-center border-r border-[#384b53]"><span className="mt-1.5 h-[3px] w-3 bg-[#384b53]" /></button>
              <button aria-label="最大化" className="flex w-[30px] items-center justify-center border-r border-[#384b53]"><span className="h-[11px] w-[14px] border-[3px] border-[#384b53]" /></button>
              <button aria-label="关闭" className="flex w-8 items-center justify-center bg-[#8f999d]"><svg viewBox="0 0 12 12" className="h-3 w-3"><path d="M1 1 l10 10 M11 1 l-10 10" stroke={DARK} strokeWidth="3" /></svg></button>
            </div>
          </header>
          <nav className="flex h-[37px] shrink-0 items-start bg-linear-to-r from-[#b0babe] via-[#9dbccb] via-20% to-[#a4bac4] pt-1 pl-2">
            <button aria-label="后退" className="mt-1 mr-[59px]"><svg viewBox="0 0 18 18" className="h-[18px] w-[18px]"><circle cx="9" cy="9" r="8" fill="none" stroke={DARK} strokeDasharray="2 2" opacity=".6" /><path d="M14 9 h-9 M8 6 l-3 3 l3 3" fill="none" stroke={DARK} strokeWidth="1.500" /></svg></button>
            <div className="flex h-7 flex-1 items-center border border-[#384b53] bg-[#e9ebec] pb-0.5 pl-[7px] text-sm whitespace-nowrap">
              <Icon name="globe" className="mr-2.5 h-[18px] w-[18px]" />
              <CrumbArrow />
              <button className="ml-2 w-[131px] text-left">iZ4p9tqxb6pd77Z</button>
              <CrumbArrow />
              <button className="mx-[11px]">网站</button>
              <CrumbArrow />
              <button className="mx-[11px]">zblog</button>
              <CrumbArrow />
            </div>
            <div className="flex h-7 w-[111px] items-center justify-between pl-3 pr-1">
              <button aria-label="刷新"><span className="block h-3 w-2 rounded bg-[#384b53]" /></button>
              <button aria-label="帮助" className="flex h-4 w-4 items-center justify-center rounded-full bg-[#384b53] text-xs font-bold text-[#b4b8b9]">?</button>
            </div>
          </nav>
          <div className="flex h-8 shrink-0 items-center gap-[22px] bg-linear-to-b from-[#fcfefe] from-60% to-[#ebedee] pl-[15px] text-sm">
            <button>文件(F)</button>
            <button>视图(V)</button>
            <button>帮助(H)</button>
          </div>
          <div className="flex min-h-0 flex-1 bg-[#e4e6e7]">
            <Connections />
            <div className="w-[6px] shrink-0" />
            <Home />
            <div className="w-2 shrink-0" />
            <Actions />
          </div>
          <div className="flex h-7 shrink-0 items-center border-b border-[#384b53] bg-linear-to-r from-[#eff1f1] to-[#fcfefe] to-55% pt-0.5 pl-1 text-sm">就绪</div>
        </div>
      </div>
      <Taskbar />

      <div className="absolute bottom-[158px] left-[30px] h-[33px] w-[10px] bg-[#45809c]" />
      <div className="absolute left-[258px] top-2 flex h-[54px] w-14 items-center justify-center rounded-full border-[3px] border-white bg-[#60bdea] text-sm text-white">32:29</div>
      <MeetingBar />
      <div className="absolute right-[381px] top-[58px] flex h-10 w-[275px] items-center bg-[#384b53] pl-4 text-sm font-normal text-[#e6eaeb]">
        <svg viewBox="0 0 8 16" className="mr-7 h-4 w-2"><rect x="2" y="1" width="4" height="8" rx="2" fill={BLUE} opacity=".6" /><path d="M4 11 v4" stroke={BLUE} /></svg>
        正在讲话: 小迪安全
      </div>
      <Watermark />
      <Chat />
      <div className="absolute left-[164px] top-[366px] h-[25px] w-[45px] border border-[#384b53] bg-[#f0f2f2] pl-2 text-sm">p</div>
      <svg viewBox="0 0 27 46" className="absolute left-[177px] top-[351px] h-[46px] w-[27px]" aria-hidden="true">
        <path d="M2 2 v35 l7 -7 l8 14 l4 -2 l-7 -14 h11z" fill={PAPER} stroke={DARK} strokeWidth="1.500" />
      </svg>
    </div>
  );
}
